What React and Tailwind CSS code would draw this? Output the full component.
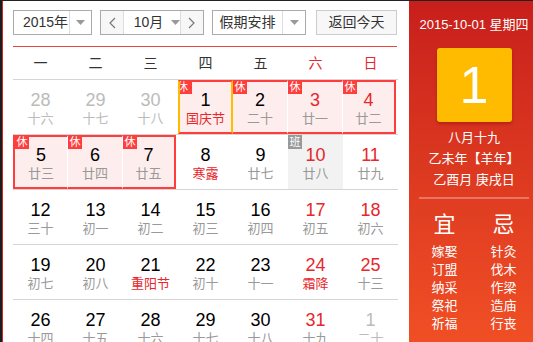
import React from "react";

const font = { fontFamily: '"Liberation Sans", "Noto Sans CJK SC", sans-serif' };

// d: day, l: lunar, o: other month, f: festival text, r: red number,
// rest: holiday box, s/e: box start/end, t: today, tag, work
const rows = [
  [
    { d: 28, l: "十六", o: true },
    { d: 29, l: "十七", o: true },
    { d: 30, l: "十八", o: true },
    { d: 1, l: "国庆节", f: true, rest: true, s: true, t: true, tag: "休" },
    { d: 2, l: "二十", rest: true, tag: "休" },
    { d: 3, l: "廿一", r: true, rest: true, tag: "休" },
    { d: 4, l: "廿二", r: true, rest: true, e: true, tag: "休" },
  ],
  [
    { d: 5, l: "廿三", rest: true, s: true, tag: "休" },
    { d: 6, l: "廿四", rest: true, tag: "休" },
    { d: 7, l: "廿五", rest: true, e: true, tag: "休" },
    { d: 8, l: "寒露", f: true },
    { d: 9, l: "廿七" },
    { d: 10, l: "廿八", r: true, work: true },
    { d: 11, l: "廿九", r: true },
  ],
  [
    { d: 12, l: "三十" },
    { d: 13, l: "初一" },
    { d: 14, l: "初二" },
    { d: 15, l: "初三" },
    { d: 16, l: "初四" },
    { d: 17, l: "初五", r: true },
    { d: 18, l: "初六", r: true },
  ],
  [
    { d: 19, l: "初七" },
    { d: 20, l: "初八" },
    { d: 21, l: "重阳节", f: true },
    { d: 22, l: "初十" },
    { d: 23, l: "十一" },
    { d: 24, l: "霜降", f: true, r: true },
    { d: 25, l: "十三", r: true },
  ],
  [
    { d: 26, l: "十四" },
    { d: 27, l: "十五" },
    { d: 28, l: "十六" },
    { d: 29, l: "十七" },
    { d: 30, l: "十八" },
    { d: 31, l: "十九", r: true },
    { d: 1, l: "二十", o: true },
  ],
];

const weekdays = ["一", "二", "三", "四", "五", "六", "日"];
const yi = ["嫁娶", "订盟", "纳采", "祭祀", "祈福"];
const ji = ["针灸", "伐木", "作梁", "造庙", "行丧"];

function Caret() {
  return (
    <svg width="9" height="5" viewBox="0 0 9 5" className="shrink-0">
      <path d="M0 0h9L4.5 5z" fill="#999" />
    </svg>
  );
}

function Chevron({ dir }) {
  return (
    <svg width="8" height="12" viewBox="0 0 8 12">
      <polyline
        points={dir === "left" ? "7,1 2,6 7,11" : "1,1 6,6 1,11"}
        fill="none"
        stroke="#777"
        strokeWidth="1.2"
      />
    </svg>
  );
}

function Cell({ c }) {
  let cls = "relative flex flex-col items-center h-[54px] ";
  if (c.rest) {
    cls += "bg-[#fdeded] border-y-2 border-y-[#ff3d3d] pt-[8px] ";
    if (c.t) cls += "border-x-2 border-x-[#ffbb00] ";
    else if (c.s) cls += "border-l-2 border-l-[#ff3d3d] ";
    if (c.e) cls += "border-r-2 border-r-[#ff3d3d] mr-[2px] ";
    else if (!c.t) cls += "border-r border-r-white ";
  } else {
    cls += "pt-[10px] ";
  }
  if (c.work) cls += "bg-[#f2f2f2] ";

  const numColor = c.o ? "text-[#bbb]" : c.r ? "text-[#e8262b]" : "text-black";
  const lunColor = c.o ? "text-[#bbb]" : c.f ? "text-[#e8262b]" : "text-[#999]";

  return (
    <div className={cls}>
      {c.tag && (
        <span
          className={
            "absolute -top-[2px] left-0 h-[14px] overflow-hidden bg-[#ff3d3d] text-white text-[11px] leading-[14px] " +
            (c.t ? "w-[12px]" : "w-[14px] text-center")
          }
        >
          <span className={c.t ? "block -ml-[3px]" : ""}>{c.tag}</span>
        </span>
      )}
      {c.work && (
        <span className="absolute top-0 left-0 w-[14px] h-[14px] bg-[#999] text-white text-[11px] leading-[14px] text-center">
          班
        </span>
      )}
      <span className={"text-[18px] leading-[20px] " + numColor}>{c.d}</span>
      <span className={"mt-[1px] text-[13px] leading-[16px] " + lunColor}>{c.l}</span>
    </div>
  );
}

export default function App() {
  return (
    <div
      className="flex w-[533px] h-[342px] overflow-hidden border-t border-[#222] border-l-2 border-l-[#1c1c1c] bg-white"
      style={font}
    >
      {/* Left: calendar */}
      <div className="w-[407px] shrink-0 border-l border-l-[#d4251f] pl-[10px] pt-[9px]">
        {/* Controls */}
        <div className="flex items-center h-[25px] text-[14px] text-[#333] whitespace-nowrap">
          <div className="flex w-[79px] h-full border border-[#aaa] bg-white">
            <div className="w-[55px] flex items-center justify-center pl-[8px]">2015年</div>
            <div className="flex-1 border-l border-[#ddd] flex items-center justify-center">
              <Caret />
            </div>
          </div>
          <div className="flex w-[104px] h-full ml-[8px] border border-[#aaa] bg-white">
            <div className="w-[22px] flex items-center justify-center bg-[#f7f7f7]">
              <Chevron dir="left" />
            </div>
            <div className="flex-1 border-x border-[#ddd] flex items-center pl-[10px] gap-[8px]">
              <span>10月</span>
              <Caret />
            </div>
            <div className="w-[22px] flex items-center justify-center bg-[#f7f7f7]">
              <Chevron dir="right" />
            </div>
          </div>
          <div className="flex w-[94px] h-full ml-[8px] border border-[#aaa] bg-white">
            <div className="w-[69px] flex items-center justify-center">假期安排</div>
            <div className="flex-1 border-l border-[#ddd] flex items-center justify-center">
              <Caret />
            </div>
          </div>
          <div className="flex w-[81px] h-full ml-[10px] border border-[#ccc] bg-[#f7f7f7] items-center justify-center">
            返回今天
          </div>
        </div>

        <div className="mt-[11px] w-[384px] h-px bg-[#f0433f]" />

        {/* Weekday header */}
        <div className="grid grid-cols-7 w-[385px] h-[33px] border-b border-[#d5d5d5] text-[14px] items-center">
          {weekdays.map((w, i) => (
            <div key={w} className={"text-center " + (i > 4 ? "text-[#e8262b]" : "text-[#333]")}>
              {w}
            </div>
          ))}
        </div>

        {/* Days */}
        {rows.map((row, ri) => (
          <div key={ri} className="grid grid-cols-7 w-[385px] border-b border-[#d5d5d5]">
            {row.map((c, ci) => (
              <Cell key={ci} c={c} />
            ))}
          </div>
        ))}
      </div>

      {/* Right: today panel */}
      <div className="flex-1 flex flex-col items-center pl-[6px] text-white bg-gradient-to-b from-[#c81e1c] to-[#f04f25]">
        <div className="mt-[16px] text-[13px] leading-[16px] whitespace-nowrap">2015-10-01 星期四</div>
        <div className="mt-[15px] w-[75px] h-[74px] rounded-[3px] bg-[#ffbb00] shadow-[0_2px_3px_rgba(120,0,0,0.35)] flex items-center justify-center text-[52px] leading-none">
          1
        </div>
        <div className="mt-[5px] text-[13px] leading-[21px] text-center">
          <div>八月十九</div>
          <div>乙未年【羊年】</div>
          <div>乙酉月 庚戌日</div>
        </div>
        <div className="mt-[7px] w-[110px] h-[2px] bg-white/30" />
        <div className="mt-[13px] flex gap-[33px]">
          <div className="flex flex-col items-center">
            <div className="text-[22px] leading-[26px]">宜</div>
            <div className="mt-[5px] text-[13px] leading-[18px] flex flex-col items-center">
              {yi.map((t) => (
                <span key={t}>{t}</span>
              ))}
            </div>
          </div>
          <div className="flex flex-col items-center">
            <div className="text-[22px] leading-[26px]">忌</div>
            <div className="mt-[5px] text-[13px] leading-[18px] flex flex-col items-center">
              {ji.map((t) => (
                <span key={t}>{t}</span>
              ))}
            </div>
          </div>
        </div>
      </div>
    </div>
  );
}
